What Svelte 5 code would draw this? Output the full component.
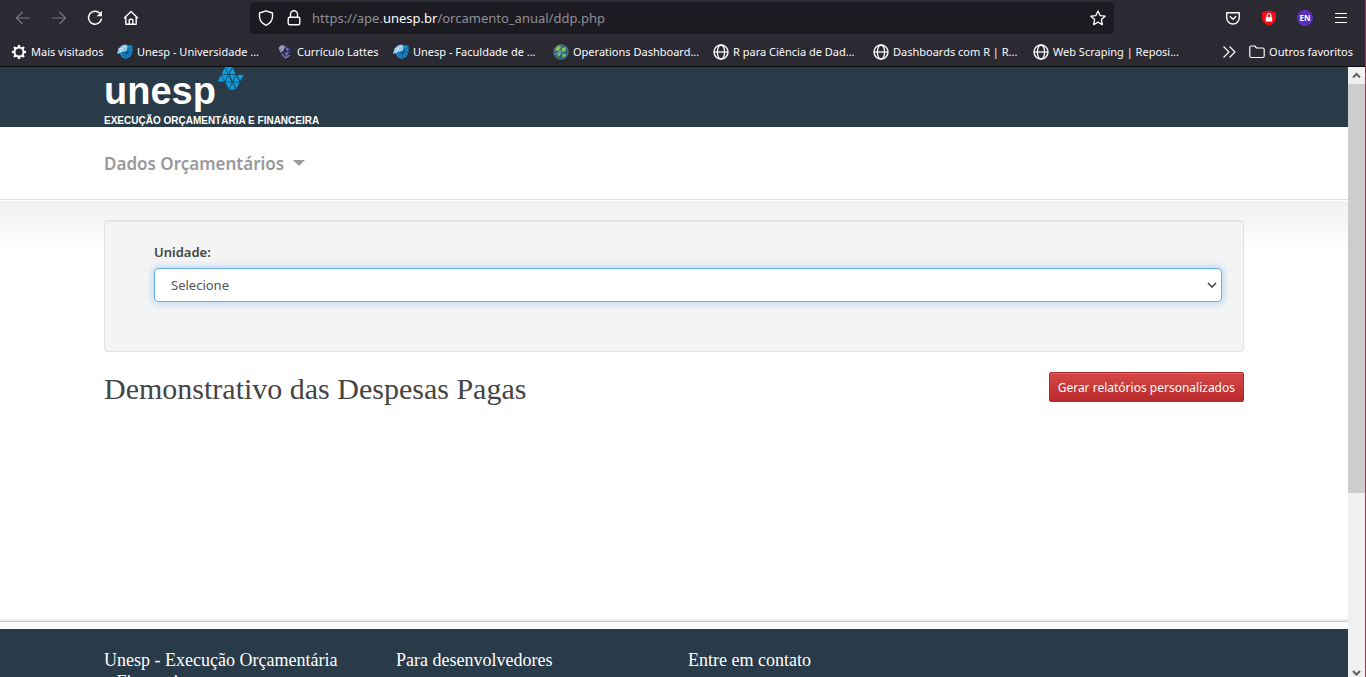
<script>
  const bookmarks = [
    { label: 'Mais visitados', icon: 'gear', size: 'short' },
    { label: 'Unesp - Universidade ...', icon: 'unesp', size: 'long' },
    { label: 'Currículo Lattes', icon: 'lattes', size: 'medium' },
    { label: 'Unesp - Faculdade de ...', icon: 'unesp', size: 'long' },
    { label: 'Operations Dashboard...', icon: 'earth', size: 'long' },
    { label: 'R para Ciência de Dad...', icon: 'globe', size: 'long' },
    { label: 'Dashboards com R | R...', icon: 'globe', size: 'long' },
    { label: 'Web Scraping | Reposi...', icon: 'globe', size: 'long' }
  ];
  const footerColumns = [
    'Unesp - Execução Orçamentária e Financeira',
    'Para desenvolvedores',
    'Entre em contato'
  ];
  const teeth = [0, 45, 90, 135, 180, 225, 270, 315];
  let unit = $state('Selecione');
</script>

{#snippet icon(name)}
  <svg class="icon" viewBox="0 0 16 16" width="16" height="16" aria-hidden="true">
    {#if name === 'back'}
      <path d="M15 8H1.500M7.500 2 1.500 8l6 6" />
    {:else if name === 'forward'}
      <path d="M1 8h13.500M8.500 2l6 6-6 6" />
    {:else if name === 'reload'}
      <path d="M12.800 3.200A6.500 6.500 0 1 0 14.500 8.500" stroke-width="1.500" />
      <path d="M15 .8v5.400H9.600z" fill="currentColor" stroke="none" />
    {:else if name === 'home'}
      <path d="M1 8.200 8 1.500l7 6.700M2.800 7v7.300h10.400V7M6.200 14V10.200a1 1 0 0 1 1-1h1.600a1 1 0 0 1 1 1V14" stroke-width="1.400" />
    {:else if name === 'shield'}
      <path d="M8 .8 14.500 3v3.500c0 4-2.500 7-6.500 8.800C4 13.500 1.500 10.500 1.500 6.500V3z" stroke-width="1.400" />
    {:else if name === 'lock'}
      <rect x="2.200" y="7.200" width="11.600" height="7.600" rx="1.500" stroke-width="1.400" />
      <path d="M4.500 7V4.200a3.500 3.500 0 0 1 7 0V7" stroke-width="1.400" />
    {:else if name === 'star'}
      <path d="m8 1 2.100 4.600 5 .6-3.700 3.400 1 5L8 12.100 3.600 14.600l1-5L.9 6.200l5-.6z" stroke-width="1.300" />
    {:else if name === 'pocket'}
      <path d="M1.700 2.700h12.600v5a6.300 6.300 0 0 1-12.600 0zM4.800 6.300 8 9.300l3.200-3" stroke-width="1.400" />
    {:else if name === 'blocker'}
      <path d="M8 .5 15 2.500v4.700C15 11 12.500 14 8 15.800 3.500 14 1 11 1 7.200V2.500z" fill="#f00d15" stroke="none" />
      <rect x="4.800" y="7" width="6.400" height="4.500" fill="#fff" stroke="none" />
      <path d="M6.200 7V5.300a1.800 1.800 0 0 1 3.600 0V7" stroke="#fff" stroke-width="1.200" />
    {:else if name === 'menu'}
      <path d="M2 3.500h12M2 7.500h12M2 12.500h12" stroke-width="1.100" />
    {:else if name === 'more'}
      <path d="m2.500 2.500 5.500 5.500-5.500 5.500M8.500 2.500l5.500 5.500-5.500 5.500" stroke-width="1.200" />
    {:else if name === 'folder'}
      <path d="M.8 12V3.500a1.500 1.500 0 0 1 1.500-1.500h3.500l1.700 2h6.200a1.500 1.500 0 0 1 1.500 1.500V12a1.500 1.500 0 0 1-1.500 1.500H2.300A1.500 1.500 0 0 1 .8 12z" stroke-width="1.200" />
    {:else if name === 'gear'}
      <circle cx="8" cy="8" r="4.500" stroke-width="2" />
      {#each teeth as angle}
        <path d="M8 3.500V.9" stroke-width="2.300" transform="rotate({angle} 8 8)" />
      {/each}
    {:else if name === 'globe'}
      <circle cx="8" cy="8" r="7" stroke-width="1.400" />
      <ellipse cx="8" cy="8" rx="3.600" ry="7" stroke-width="1.300" />
      <path d="M1 8h14" stroke-width="1.300" />
    {:else if name === 'unesp'}
      <path d="m3.500 8 1-5L8 1l7.500.5v6.500l-1.800 4.500-4.700 2.500-4.500-1.700L3 10z" fill="#1587cc" stroke="none" />
      <path d="M0 10 1.500 4.500 5 1.200 9 .5l1.500 2L9.500 7 4 9z" fill="#8ac9e8" stroke="none" />
      <path d="m9.500 8 5-4.500M9.500 8h5.500M9.500 8l4 4.500M9.500 8l-.5 6.500M9.500 8 5 12.500M9.500 8 4 8.800" stroke="#0b4475" stroke-width=".8" />
      <path d="m2 5 3.500-.5L9 1.500M5.500 4.500 3 8.500" stroke="#e9f5fa" stroke-width=".7" />
    {:else if name === 'lattes'}
      <path d="M1.500 3.500 4.500 1 8.500.5l5 3.500 1 4-1.500 4-5.500 3.500-4-4.500z" fill="#31305f" stroke="none" />
      <path d="M1.500 3.500 4.500 1l3 1-1 4-3 3z" fill="#8c8bad" stroke="none" />
      <path d="m8.500 3 3.500 2-1.500 2.500zM8 9l4-1-2.500 4.500z" fill="#7877b0" stroke="none" />
      <path d="m2.500 4.500 4-2.500M5 7l3-5M5 10l3.500 4 4-2.500" stroke="#c5c4da" stroke-width=".8" />
    {:else if name === 'earth'}
      <circle cx="8" cy="8" r="7.200" fill="#216489" stroke="#71878f" stroke-width=".8" />
      <path d="m2 6 2-3.500 3.500-1L8 4 6 6l-2 1zM9.500 3l3.500 1.500-.5 3-3 .5-.500-2.500zM4.500 9l3.500-.5-1 3-2 1.500zM9.500 10.500l3.500-1-1.500 3.500-2 .5z" fill="#86bd42" stroke="none" />
      <path d="m2 10.500 11-7M3 4.500l10 7.500" stroke="#b5d7c9" stroke-width=".6" />
    {/if}
  </svg>
{/snippet}

<div class="window">
  <header class="chrome">
    <div class="toolbar">
      <nav class="history" aria-label="Navegação">
        <button class="tool dim" aria-label="Voltar">{@render icon('back')}</button>
        <button class="tool dim" aria-label="Avançar">{@render icon('forward')}</button>
        <button class="tool" aria-label="Recarregar">{@render icon('reload')}</button>
        <button class="tool" aria-label="Página inicial">{@render icon('home')}</button>
      </nav>
      <div class="address">
        {@render icon('shield')}
        {@render icon('lock')}
        <span class="url">https://ape.<b>unesp.br</b>/orcamento_anual/ddp.php</span>
        <button class="tool" aria-label="Favoritar">{@render icon('star')}</button>
      </div>
      <div class="extensions">
        <button class="tool" aria-label="Pocket">{@render icon('pocket')}</button>
        <button class="tool" aria-label="Bloqueador">{@render icon('blocker')}</button>
        <button class="tool"><span class="profile">EN</span></button>
        <button class="tool" aria-label="Menu">{@render icon('menu')}</button>
      </div>
    </div>
    <div class="bookmarks">
      {#each bookmarks as mark}
        <a class="bookmark {mark.size}" href="#bookmark">{@render icon(mark.icon)}<span>{mark.label}</span></a>
      {/each}
      <button class="tool more" aria-label="Mais favoritos">{@render icon('more')}</button>
      <a class="bookmark" href="#others">{@render icon('folder')}<span>Outros favoritos</span></a>
    </div>
  </header>

  <div class="viewport">
    <div class="page">
      <div class="brandbar">
        <div class="container">
          <a class="brand" href="#home">
            <span class="wordmark">unesp
              <svg class="mark" viewBox="0 0 28 24" width="28" height="24" aria-hidden="true">
                <path d="M7.700 0h7.700l4 7.500H27.500L23.100 15l-3.900 7.500h-7.500L7.700 15H0L4 7.500z" fill="#0a9ee0" />
                <path d="M4 7.500h23M0 15h24M7.700 0l11.500 22.500M15.400 0l11.600 22.500M4 7.500l7.700 15M15.400 0 7.700 15M7.700 0 0 15M19.400 7.500l-7.700 15M27 7.500l-7.700 15M19.400 7.500 23.100 15M11.700 7.500 19.200 22.500M11.700 7.500 15.400 15" fill="none" stroke="#293a48" stroke-width=".8" />
              </svg>
            </span>
            <span class="tagline">EXECUÇÃO ORÇAMENTÁRIA E FINANCEIRA</span>
          </a>
        </div>
      </div>
      <nav class="mainnav">
        <div class="container">
          <button class="dropdown">Dados Orçamentários<span class="caret"></span></button>
        </div>
      </nav>
      <main>
        <div class="container">
          <form class="well">
            <label for="unit">Unidade:</label>
            <div class="field">
              <select id="unit" bind:value={unit}>
                <option>Selecione</option>
              </select>
              <svg class="chevron" viewBox="0 0 10 6" width="10" height="6" aria-hidden="true"><path d="m1 1 4 4 4-4" /></svg>
            </div>
          </form>
          <div class="heading">
            <h1>Demonstrativo das Despesas Pagas</h1>
            <button class="report">Gerar relatórios personalizados</button>
          </div>
        </div>
      </main>
      <footer>
        <div class="container columns">
          {#each footerColumns as title}
            <h2>{title}</h2>
          {/each}
        </div>
      </footer>
    </div>
    <div class="scrollbar" aria-hidden="true">
      <svg viewBox="0 0 17 17" width="17" height="17"><path d="m5 10.500 3.500-3.500 3.500 3.500" /></svg>
      <div class="track"><div class="thumb"></div></div>
      <svg viewBox="0 0 17 17" width="17" height="17"><path d="m5 11 3.500 3.500L12 11" /></svg>
    </div>
  </div>
</div>

<style>
  :global(body) {
    margin: 0;
    overflow: hidden;
  }
  .window {
    display: flex;
    flex-direction: column;
    height: 100vh;
    overflow: hidden;
    box-sizing: border-box;
    border-right: 1px solid #e31b2b;
    font-family: "Noto Sans", sans-serif;
  }
  button {
    padding: 0;
    border: 0;
    background: none;
    color: inherit;
    font: inherit;
  }
  a {
    color: inherit;
    text-decoration: none;
  }
  .icon {
    flex: none;
    display: block;
    fill: none;
    stroke: currentColor;
    stroke-width: 1.2;
    stroke-linejoin: round;
  }
  .chrome {
    flex: none;
    background: #2b2a33;
    color: #fbfbfe;
    border-bottom: 1px solid #0c0c0d;
  }
  .toolbar {
    display: flex;
    align-items: center;
    height: 36px;
  }
  .history {
    display: flex;
    gap: 20px;
    width: 235px;
    padding-left: 15px;
  }
  .tool {
    display: flex;
    align-items: center;
    justify-content: center;
    width: 16px;
    height: 16px;
  }
  .dim {
    color: #78777e;
  }
  .address {
    flex: 1;
    display: flex;
    align-items: center;
    gap: 12px;
    height: 32px;
    padding: 0 8px;
    box-sizing: border-box;
    border-radius: 4px;
    background: #1c1b22;
  }
  .url {
    flex: 1;
    margin-left: -2px;
    color: #8f8f96;
    font-size: 13px;
    line-height: 20px;
  }
  .url b {
    color: #fbfbfe;
    font-weight: 400;
  }
  .extensions {
    display: flex;
    justify-content: flex-end;
    gap: 20px;
    width: 235px;
    padding-right: 16px;
  }
  .profile {
    width: 16px;
    border-radius: 8px;
    background: #5b2fc0;
    color: #fff;
    font-size: 8px;
    font-weight: 700;
    line-height: 16px;
    text-align: center;
  }
  .bookmarks {
    display: flex;
    align-items: center;
    height: 28px;
    padding: 2px 12px 0 11px;
    font-size: 11px;
    line-height: 16px;
    white-space: nowrap;
  }
  .bookmark {
    display: flex;
    align-items: center;
    gap: 4px;
  }
  .short {
    width: 106px;
  }
  .medium {
    width: 116px;
  }
  .long {
    width: 160px;
  }
  .more {
    margin-left: auto;
    margin-right: 12px;
  }
  .viewport {
    flex: 1;
    display: flex;
    min-height: 0;
    overflow: hidden;
  }
  .page {
    flex: 1;
    min-width: 0;
    background: #fff;
  }
  .container {
    max-width: 1140px;
    margin: 0 auto;
  }
  .brandbar {
    height: 60px;
    background: #293a48;
    color: #fff;
  }
  .brand {
    display: flex;
    flex-direction: column;
    font-family: "Liberation Sans", sans-serif;
    font-weight: 700;
  }
  .wordmark {
    display: flex;
    align-items: flex-start;
    gap: 1px;
    height: 48px;
    font-size: 38px;
    line-height: 48px;
  }
  .tagline {
    font-size: 10px;
    line-height: 12px;
  }
  .mainnav {
    height: 72px;
    border-bottom: 1px solid #ddd;
  }
  .dropdown {
    display: flex;
    align-items: center;
    gap: 9px;
    height: 72px;
    color: #999;
    font-size: 17px;
    font-weight: 600;
  }
  .caret {
    border: 6px solid transparent;
    border-top-color: #999;
    border-bottom: 0;
  }
  main {
    height: 401px;
    margin-top: 1px;
    padding-top: 19px;
    background: linear-gradient(#f0f0f0, #fff 50px);
    border-bottom: 1px solid #ccc;
    box-shadow: inset 0 -2px 1px #eee;
  }
  .well {
    min-height: 132px;
    box-sizing: border-box;
    padding: 20px 21px 20px 49px;
    border: 1px solid #e1e1e1;
    border-radius: 4px;
    background: #f4f4f4;
    box-shadow: inset 0 1px 1px #0000000d;
  }
  label {
    display: block;
    margin-bottom: 5px;
    color: #444;
    font-size: 13px;
    font-weight: 600;
    line-height: 22px;
  }
  .field {
    position: relative;
  }
  select {
    display: block;
    width: 100%;
    height: 34px;
    padding: 0 16px;
    appearance: none;
    border: 1px solid #66afe9;
    border-radius: 4px;
    outline: 0;
    background: #fff;
    box-shadow: 0 0 8px #66afe999;
    color: #555;
    font-family: inherit;
    font-size: 13px;
  }
  .chevron {
    position: absolute;
    right: 5px;
    top: 14px;
    fill: none;
    stroke: #444;
    stroke-width: 1.6;
  }
  .heading {
    display: flex;
    align-items: flex-start;
    justify-content: space-between;
    margin-top: 20px;
  }
  h1 {
    margin: 0;
    color: #444;
    font-family: "Liberation Serif", serif;
    font-size: 30px;
    font-weight: 400;
    line-height: 34px;
  }
  .report {
    height: 30px;
    padding: 0 8px;
    border: 1px solid #b02a2d;
    border-radius: 2px;
    background: linear-gradient(#d64848, #b9292b);
    box-shadow: inset 0 1px 0 #ffffff26;
    color: #fff;
    font-size: 12px;
  }
  footer {
    margin-top: 7px;
    padding: 20px 0;
    background: #293a48;
    color: #fff;
  }
  .columns {
    display: grid;
    grid-template-columns: repeat(3, 262px);
    gap: 30px;
  }
  h2 {
    margin: 0;
    padding-right: 20px;
    font-family: "Liberation Serif", serif;
    font-size: 18px;
    font-weight: 400;
    line-height: 22px;
  }
  .scrollbar {
    flex: none;
    display: flex;
    flex-direction: column;
    width: 17px;
    background: #f0f0f0;
  }
  .scrollbar svg {
    flex: none;
    fill: none;
    stroke: #606060;
    stroke-width: 2;
  }
  .track {
    flex: 1;
  }
  .thumb {
    height: 71%;
    background: #cdcdcd;
  }
</style>
